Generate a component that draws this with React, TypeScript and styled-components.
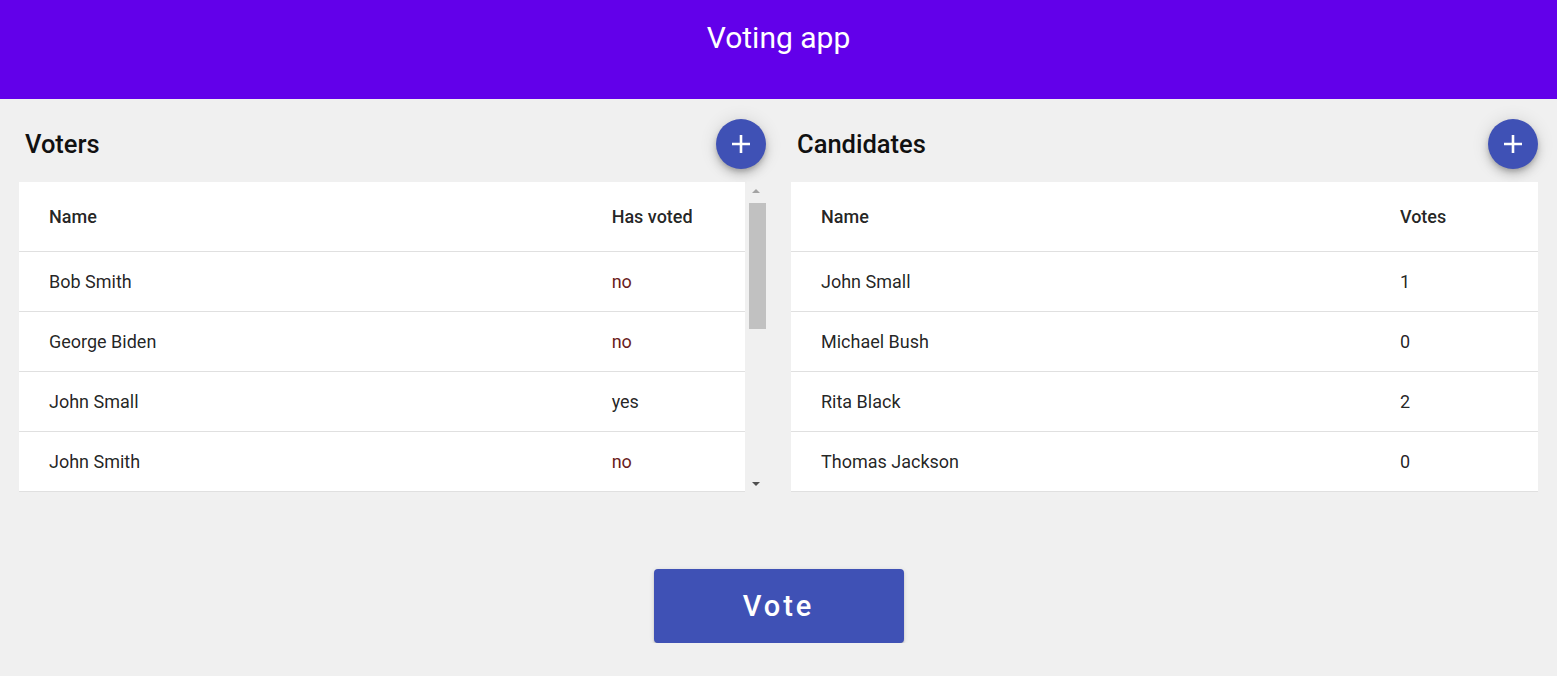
import styled, { createGlobalStyle } from "styled-components";

const GlobalStyle = createGlobalStyle`
  html, body {
    margin: 0;
    padding: 0;
    background: #f0f0f0;
    font-family: Roboto, "Helvetica Neue", Arial, sans-serif;
  }
`;

const Header = styled.header`
  height: 99px;
  background: #6200ea;
  color: #fff;
  display: flex;
  justify-content: center;
  padding-top: 20px;
  box-sizing: border-box;
`;

const AppTitle = styled.h1`
  margin: 0;
  font-size: 30px;
  font-weight: 400;
  line-height: 36px;
`;

const Panels = styled.main`
  display: grid;
  grid-template-columns: 747px 747px;
  column-gap: 25px;
  padding: 20px 19px 0;
`;

const Panel = styled.section`
  display: flex;
  flex-direction: column;
`;

const PanelHead = styled.div`
  display: flex;
  align-items: center;
  justify-content: space-between;
  height: 50px;
  padding-left: 6px;
  margin-bottom: 13px;
`;

const PanelTitle = styled.h2`
  margin: 0;
  font-size: 25.5px;
  font-weight: 500;
  color: #111;
`;

const Fab = styled.button`
  width: 50px;
  height: 50px;
  border-radius: 50%;
  border: none;
  background: #3f51b5;
  display: flex;
  align-items: center;
  justify-content: center;
  padding: 0;
  cursor: pointer;
  box-shadow: 0 3px 5px -1px rgba(0, 0, 0, 0.2), 0 6px 10px 0 rgba(0, 0, 0, 0.14),
    0 1px 18px 0 rgba(0, 0, 0, 0.12);
`;

const TableWrap = styled.div`
  display: flex;
  height: 310px;
`;

const TableBox = styled.div<{ $scroll?: boolean }>`
  flex: 1;
  background: #fff;
  overflow: hidden;
  margin-right: ${(p) => (p.$scroll ? "2px" : "0")};
`;

const Row = styled.div<{ $head?: boolean }>`
  display: grid;
  grid-template-columns: 77.5% 1fr;
  align-items: center;
  height: ${(p) => (p.$head ? "69px" : "60px")};
  border-bottom: 1px solid #e0e0e0;
  box-sizing: border-box;
  font-size: 18px;
  font-weight: ${(p) => (p.$head ? 500 : 400)};
  color: rgba(0, 0, 0, 0.87);
  &:first-child {
    height: 70px;
    padding-bottom: 1px;
  }
`;

const Cell = styled.div<{ $tone?: string }>`
  padding-left: 30px;
  color: ${(p) => p.$tone || "inherit"};
`;

const ScrollBar = styled.div`
  width: 17px;
  margin-right: 2px;
  position: relative;
  background: #f0f0f0;
`;

const Arrow = styled.div<{ $down?: boolean }>`
  height: 17px;
  display: flex;
  align-items: center;
  justify-content: center;
  position: absolute;
  left: 0;
  right: 0;
  ${(p) => (p.$down ? "bottom: 0;" : "top: 0;")}
  &::after {
    content: "";
    border-left: 4px solid transparent;
    border-right: 4px solid transparent;
    ${(p) =>
      p.$down
        ? "border-top: 4px solid #505050;"
        : "border-bottom: 4px solid #a3a3a3;"}
  }
`;

const Thumb = styled.div`
  position: absolute;
  top: 21px;
  left: 2px;
  right: -2px;
  height: 126px;
  background: #c1c1c1;
`;

const Footer = styled.div`
  display: flex;
  justify-content: center;
  padding-top: 77px;
`;

const VoteButton = styled.button`
  width: 250px;
  height: 74px;
  border: none;
  border-radius: 4px;
  background: #3f51b5;
  color: #fff;
  font-family: Roboto, Arial, sans-serif;
  font-size: 29px;
  font-weight: 500;
  letter-spacing: 3px;
  cursor: pointer;
  box-shadow: 0 3px 1px -2px rgba(0, 0, 0, 0.2), 0 2px 2px 0 rgba(0, 0, 0, 0.14),
    0 1px 5px 0 rgba(0, 0, 0, 0.12);
`;

const PlusIcon = () => (
  <svg width="22" height="22" viewBox="0 0 22 22">
    <path d="M11 2v18M2 11h18" stroke="#fff" strokeWidth="2.6" />
  </svg>
);

const voters = [
  { name: "Bob Smith", voted: false },
  { name: "George Biden", voted: false },
  { name: "John Small", voted: true },
  { name: "John Smith", voted: false },
];

const candidates = [
  { name: "John Small", votes: 1 },
  { name: "Michael Bush", votes: 0 },
  { name: "Rita Black", votes: 2 },
  { name: "Thomas Jackson", votes: 0 },
];

export default function App() {
  return (
    <>
      <GlobalStyle />
      <Header>
        <AppTitle>Voting app</AppTitle>
      </Header>
      <Panels>
        <Panel>
          <PanelHead>
            <PanelTitle>Voters</PanelTitle>
            <Fab aria-label="add voter">
              <PlusIcon />
            </Fab>
          </PanelHead>
          <TableWrap>
            <TableBox $scroll>
              <Row $head>
                <Cell>Name</Cell>
                <Cell>Has voted</Cell>
              </Row>
              {voters.map((v) => (
                <Row key={v.name}>
                  <Cell>{v.name}</Cell>
                  <Cell $tone={v.voted ? undefined : "#6a1c1c"}>
                    {v.voted ? "yes" : "no"}
                  </Cell>
                </Row>
              ))}
            </TableBox>
            <ScrollBar>
              <Arrow />
              <Thumb />
              <Arrow $down />
            </ScrollBar>
          </TableWrap>
        </Panel>
        <Panel>
          <PanelHead>
            <PanelTitle>Candidates</PanelTitle>
            <Fab aria-label="add candidate">
              <PlusIcon />
            </Fab>
          </PanelHead>
          <TableWrap>
            <TableBox>
              <Row $head>
                <Cell>Name</Cell>
                <Cell>Votes</Cell>
              </Row>
              {candidates.map((c) => (
                <Row key={c.name}>
                  <Cell>{c.name}</Cell>
                  <Cell>{c.votes}</Cell>
                </Row>
              ))}
            </TableBox>
          </TableWrap>
        </Panel>
      </Panels>
      <Footer>
        <VoteButton>Vote</VoteButton>
      </Footer>
    </>
  );
}
